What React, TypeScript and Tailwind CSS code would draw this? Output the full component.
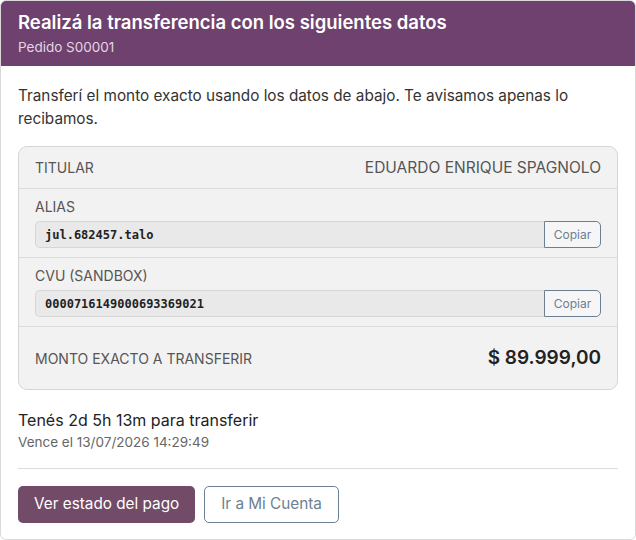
import React from "react";

const rows = [
  { label: "ALIAS", value: "jul.682457.talo" },
  { label: "CVU (SANDBOX)", value: "0000716149000693369021" },
];

function CopyField({ label, value }: { label: string; value: string }) {
  return (
    <div className="border-b border-[#dcdcdc] px-4 pt-[10px] pb-[9px]">
      <div className="text-[14px] leading-[16px] text-[#555]">{label}</div>
      <div className="mt-[6px] flex h-[27px]">
        <div className="flex flex-1 items-center rounded-l-[5px] border border-r-0 border-[#d6d6d6] bg-[#e9e9e9] px-[9px] font-['DejaVu_Sans_Mono',monospace] text-[12px] font-bold text-[#222]">
          {value}
        </div>
        <button
          type="button"
          className="w-[57px] rounded-r-[5px] border border-[#6c7f93] bg-[#f6f6f6] text-[12px] text-[#6c7f93]"
        >
          Copiar
        </button>
      </div>
    </div>
  );
}

export default function App() {
  return (
    <div className="min-h-screen bg-white font-['Inter','Noto_Sans',sans-serif]">
      <div className="h-[540px] w-[636px] overflow-hidden rounded-[6px] border border-[#d9d9d9]">
        {/* Header */}
        <div className="bg-[#6f416e] px-[17px] pt-[8px] pb-[10px]">
          <div className="text-[18.5px] font-semibold leading-[26px] text-white">
            Realizá la transferencia con los siguientes datos
          </div>
          <div className="mt-[3px] text-[13.5px] leading-[18px] text-[#e3d6e2]">Pedido S00001</div>
        </div>

        {/* Body */}
        <div className="px-[17px] pt-[18px]">
          <p className="text-[15.3px] leading-[23px] text-[#333]">
            Transferí el monto exacto usando los datos de abajo. Te avisamos apenas lo recibamos.
          </p>

          <div className="mt-[16px] overflow-hidden rounded-[9px] border border-[#d6d6d6] bg-[#f2f2f2]">
            <div className="flex h-[42px] items-center justify-between border-b border-[#dcdcdc] px-4">
              <span className="text-[14px] text-[#555]">TITULAR</span>
              <span className="text-[15.5px] text-[#555]">EDUARDO ENRIQUE SPAGNOLO</span>
            </div>
            {rows.map((r) => (
              <CopyField key={r.label} label={r.label} value={r.value} />
            ))}
            <div className="flex h-[62px] items-center justify-between px-4">
              <span className="text-[14px] text-[#555]">MONTO EXACTO A TRANSFERIR</span>
              <span className="text-[19px] font-semibold text-[#222]">$ 89.999,00</span>
            </div>
          </div>

          <div className="mt-[19px] text-[16px] leading-[22px] text-[#222]">Tenés 2d 5h 13m para transferir</div>
          <div className="mt-[1px] text-[13.5px] leading-[20px] text-[#666]">Vence el 13/07/2026 14:29:49</div>

          <div className="mt-[16px] border-t border-[#dcdcdc]" />

          <div className="mt-[17px] flex gap-[9px]">
            <button
              type="button"
              className="h-[37px] rounded-[5px] bg-[#714b67] px-[16px] text-[15.3px] text-white"
            >
              Ver estado del pago
            </button>
            <button
              type="button"
              className="h-[37px] rounded-[5px] border border-[#6c7f93] bg-white px-[16px] text-[15.3px] text-[#6c7f93]"
            >
              Ir a Mi Cuenta
            </button>
          </div>
        </div>
      </div>
    </div>
  );
}
